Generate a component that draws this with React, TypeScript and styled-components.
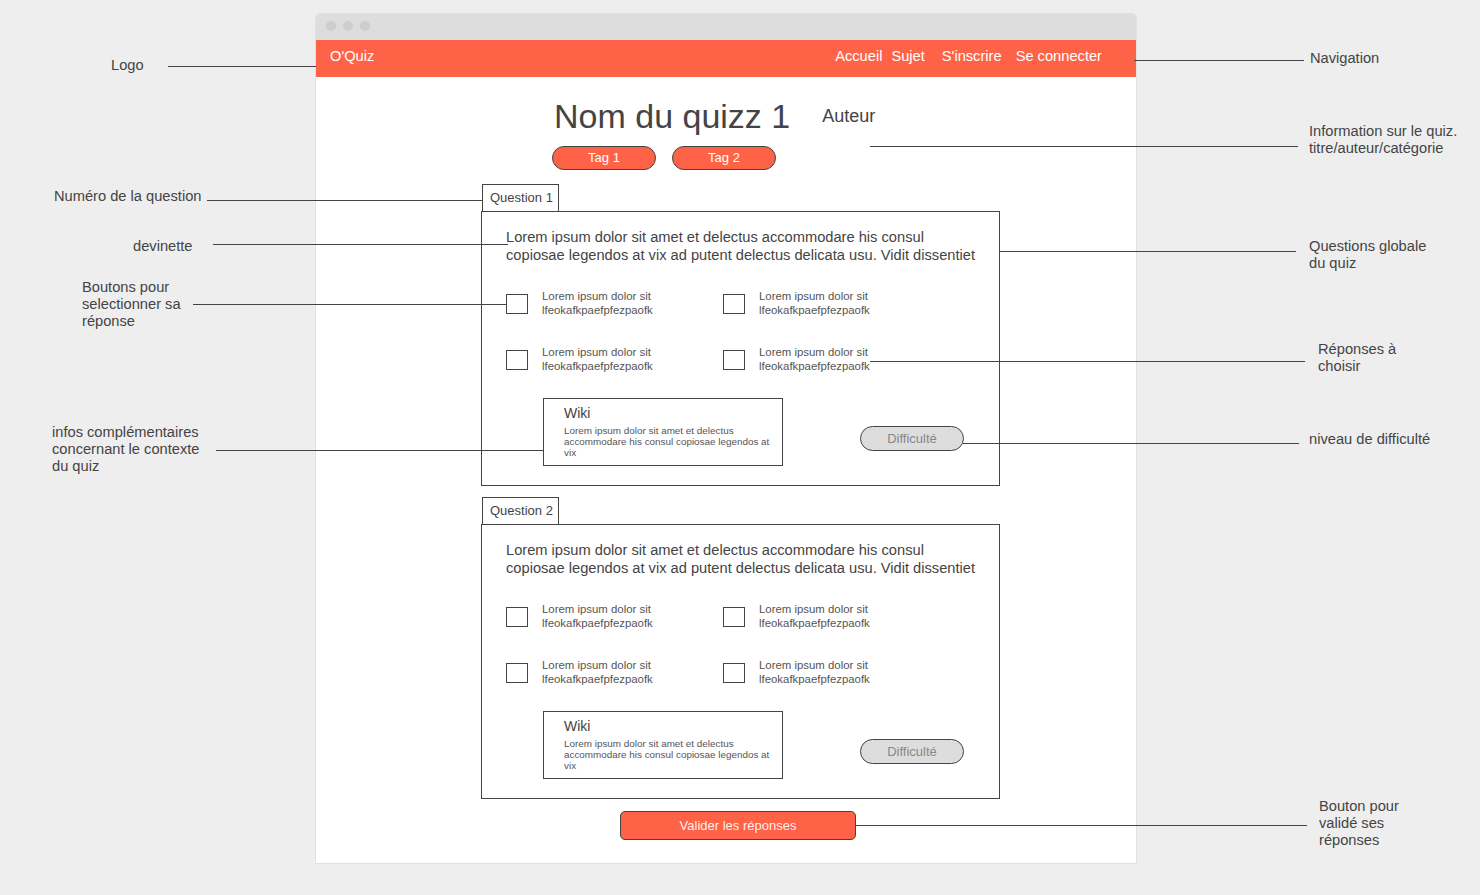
import React from "react";
import styled, { createGlobalStyle } from "styled-components";

const TOMATO = "#ff6347";
const INK = "#444444";
const BODY_SIZE = "14.67px";

const GlobalStyle = createGlobalStyle`
  html, body {
    margin: 0;
    padding: 0;
    background: #eeeeee;
  }
  body {
    font-family: "Liberation Sans", Arial, Helvetica, sans-serif;
  }
  * { box-sizing: border-box; }
`;

const Stage = styled.div`
  position: relative;
  width: 1480px;
  height: 895px;
  overflow: hidden;
  background: #eeeeee;
  padding: 13px 0 0 315px;
`;

const BrowserWindow = styled.div`
  width: 822px;
  height: 851px;
  border: 1px solid #e0e0e0;
  border-radius: 5px 5px 0 0;
  background: #ffffff;
  display: flex;
  flex-direction: column;
`;

const TitleBar = styled.div`
  flex-shrink: 0;
  height: 26px;
  background: #dddddd;
  border-radius: 4px 4px 0 0;
  display: flex;
  align-items: flex-start;
  gap: 7px;
  padding: 7px 0 0 10px;
`;

const Dot = styled.span`
  width: 10px;
  height: 10px;
  border-radius: 50%;
  background: #cdcdcd;
`;

const NavBar = styled.nav`
  flex-shrink: 0;
  height: 37px;
  background: ${TOMATO};
  color: #ffffff;
  display: flex;
  align-items: flex-start;
  padding: 0 34px 0 14px;
  font-size: ${BODY_SIZE};
  line-height: 33px;
`;

const Brand = styled.span`
  white-space: nowrap;
`;

const NavLink = styled.span<{ $gap?: number }>`
  white-space: nowrap;
  margin-left: ${(p) => (p.$gap === undefined ? "auto" : `${p.$gap}px`)};
`;

const Content = styled.main`
  flex-shrink: 0;
  display: flex;
  flex-direction: column;
  align-items: flex-start;
  padding-top: 19px;
`;

const QuizHeader = styled.header`
  padding-left: 236px;
  display: flex;
  flex-direction: column;
`;

const TitleRow = styled.div`
  display: flex;
  align-items: flex-start;
  height: 40px;
  padding-left: 2px;
`;

const QuizTitle = styled.h1`
  margin: 0;
  font-size: 34px;
  line-height: 40px;
  font-weight: normal;
  color: ${INK};
  white-space: nowrap;
`;

const Author = styled.span`
  margin-left: 32px;
  font-size: 18px;
  line-height: 40px;
  color: ${INK};
`;

const TagRow = styled.div`
  display: flex;
  gap: 16px;
  margin-top: 10px;
`;

const Tag = styled.span`
  width: 104px;
  height: 24px;
  border: 1px solid ${INK};
  border-radius: 12px;
  background: ${TOMATO};
  color: #ffffff;
  font-size: 13px;
  line-height: 22px;
  text-align: center;
`;

const QuestionList = styled.div`
  margin: 14px 0 0 165px;
  display: flex;
  flex-direction: column;
  gap: 11px;
`;

const QuestionSection = styled.section`
  display: flex;
  flex-direction: column;
  align-items: flex-start;
`;

const QuestionTab = styled.div`
  margin-left: 1px;
  width: 77px;
  height: 27px;
  border: 1px solid ${INK};
  border-bottom: none;
  padding-left: 7px;
  font-size: 13px;
  line-height: 26px;
  color: ${INK};
  white-space: nowrap;
`;

const QuestionCard = styled.div`
  width: 519px;
  border: 1px solid ${INK};
  padding: 17px 17px 19px 24px;
  display: flex;
  flex-direction: column;
`;

const QuestionText = styled.p`
  margin: 0;
  font-size: ${BODY_SIZE};
  line-height: 17.5px;
  color: ${INK};
`;

const AnswerGrid = styled.div`
  margin-top: 25px;
  display: grid;
  grid-template-columns: 217px 217px;
  row-gap: 28px;
`;

const Answer = styled.label`
  display: flex;
  align-items: flex-start;
  gap: 14px;
`;

const CheckBox = styled.span`
  flex-shrink: 0;
  width: 22px;
  height: 20px;
  margin-top: 5px;
  border: 1px solid ${INK};
  background: #ffffff;
`;

const AnswerText = styled.span`
  font-size: 11.4px;
  line-height: 14px;
  color: #555555;
  white-space: nowrap;
`;

const CardFooter = styled.div`
  margin-top: 25px;
  padding-left: 37px;
  display: flex;
  align-items: flex-start;
`;

const WikiBox = styled.div`
  width: 240px;
  height: 68px;
  border: 1px solid ${INK};
  padding: 6px 10px 0 20px;
`;

const WikiTitle = styled.div`
  font-size: 14px;
  line-height: 16px;
  color: ${INK};
`;

const WikiBody = styled.div`
  margin-top: 3.5px;
  font-size: 9.9px;
  line-height: 11px;
  color: #555555;
`;

const Difficulty = styled.span`
  margin: 28px 0 0 77px;
  width: 104px;
  height: 25px;
  border: 1px solid ${INK};
  border-radius: 12.5px;
  background: #dddddd;
  color: #888888;
  font-size: 13px;
  line-height: 23px;
  text-align: center;
`;

const SubmitButton = styled.button`
  margin: 12px 0 0 304px;
  width: 236px;
  height: 29px;
  padding: 0;
  border: 1px solid ${INK};
  border-radius: 5px;
  background: ${TOMATO};
  color: rgba(255, 255, 255, 0.92);
  font-family: inherit;
  font-size: 13px;
  line-height: 27px;
  text-align: center;
`;

/* Annotation overlay: callout labels and leader lines of the wireframe diagram */
const Leader = styled.span<{ $x1: number; $x2: number; $y: number }>`
  position: absolute;
  left: ${(p) => p.$x1}px;
  top: ${(p) => p.$y}px;
  width: ${(p) => p.$x2 - p.$x1}px;
  height: 1px;
  background: ${INK};
`;

const CalloutLabel = styled.div<{ $x: number; $y: number }>`
  position: absolute;
  left: ${(p) => p.$x}px;
  top: ${(p) => p.$y}px;
  font-size: ${BODY_SIZE};
  line-height: 17px;
  color: ${INK};
  white-space: nowrap;
`;

type Callout = {
  lines: string[];
  x: number;
  y: number;
  leader: [number, number, number];
};

const callouts: Callout[] = [
  { lines: ["Logo"], x: 111, y: 57, leader: [168, 316, 66] },
  { lines: ["Navigation"], x: 1310, y: 50, leader: [1134, 1304, 60] },
  {
    lines: ["Information sur le quiz.", "titre/auteur/catégorie"],
    x: 1309,
    y: 123,
    leader: [870, 1298, 146],
  },
  { lines: ["Numéro de la question"], x: 54, y: 188, leader: [207, 482, 200] },
  { lines: ["devinette"], x: 133, y: 238, leader: [213, 508, 244] },
  {
    lines: ["Boutons pour", "selectionner sa", "réponse"],
    x: 82,
    y: 279,
    leader: [193, 506, 304],
  },
  {
    lines: ["infos complémentaires", "concernant le contexte", "du quiz"],
    x: 52,
    y: 424,
    leader: [216, 543, 450],
  },
  {
    lines: ["Questions globale", "du quiz"],
    x: 1309,
    y: 238,
    leader: [999, 1296, 251],
  },
  {
    lines: ["Réponses à", "choisir"],
    x: 1318,
    y: 341,
    leader: [870, 1305, 361],
  },
  {
    lines: ["niveau de difficulté"],
    x: 1309,
    y: 431,
    leader: [963, 1299, 443],
  },
  {
    lines: ["Bouton pour", "validé ses", "réponses"],
    x: 1319,
    y: 798,
    leader: [856, 1307, 825],
  },
];

const QUESTION =
  "Lorem ipsum dolor sit amet et delectus accommodare his consul copiosae legendos at vix ad putent delectus delicata usu. Vidit dissentiet";

function Question({ index }: { index: number }) {
  return (
    <QuestionSection>
      <QuestionTab>Question {index}</QuestionTab>
      <QuestionCard>
        <QuestionText>{QUESTION}</QuestionText>
        <AnswerGrid>
          {[0, 1, 2, 3].map((i) => (
            <Answer key={i}>
              <CheckBox />
              <AnswerText>
                Lorem ipsum dolor sit
                <br />
                lfeokafkpaefpfezpaofk
              </AnswerText>
            </Answer>
          ))}
        </AnswerGrid>
        <CardFooter>
          <WikiBox>
            <WikiTitle>Wiki</WikiTitle>
            <WikiBody>
              Lorem ipsum dolor sit amet et delectus accommodare his consul copiosae legendos at vix
            </WikiBody>
          </WikiBox>
          <Difficulty>Difficulté</Difficulty>
        </CardFooter>
      </QuestionCard>
    </QuestionSection>
  );
}

export default function App() {
  return (
    <>
      <GlobalStyle />
      <Stage>
        <BrowserWindow>
          <TitleBar>
            <Dot />
            <Dot />
            <Dot />
          </TitleBar>
          <NavBar>
            <Brand>O'Quiz</Brand>
            <NavLink>Accueil</NavLink>
            <NavLink $gap={9}>Sujet</NavLink>
            <NavLink $gap={17}>S'inscrire</NavLink>
            <NavLink $gap={14}>Se connecter</NavLink>
          </NavBar>
          <Content>
            <QuizHeader>
              <TitleRow>
                <QuizTitle>Nom du quizz 1</QuizTitle>
                <Author>Auteur</Author>
              </TitleRow>
              <TagRow>
                <Tag>Tag 1</Tag>
                <Tag>Tag 2</Tag>
              </TagRow>
            </QuizHeader>
            <QuestionList>
              <Question index={1} />
              <Question index={2} />
            </QuestionList>
            <SubmitButton type="button">Valider les réponses</SubmitButton>
          </Content>
        </BrowserWindow>

        {callouts.map((c) => (
          <React.Fragment key={c.lines[0]}>
            <Leader $x1={c.leader[0]} $x2={c.leader[1]} $y={c.leader[2]} />
            <CalloutLabel $x={c.x} $y={c.y}>
              {c.lines.map((l, i) => (
                <React.Fragment key={i}>
                  {i > 0 && <br />}
                  {l}
                </React.Fragment>
              ))}
            </CalloutLabel>
          </React.Fragment>
        ))}
      </Stage>
    </>
  );
}
